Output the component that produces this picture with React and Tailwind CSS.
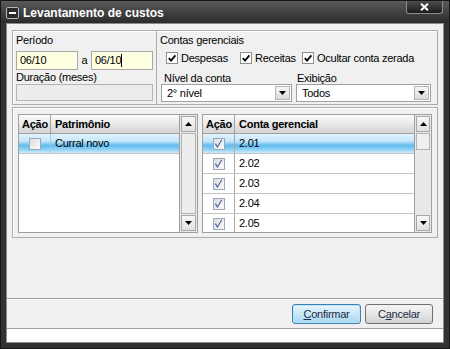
import React from 'react'

const Tri = ({ down }) => (
  <svg width="7" height="4" viewBox="0 0 7 4">
    <path d={down ? 'M0 0H7L3.5 4Z' : 'M0 4H7L3.5 0Z'} fill="#000" />
  </svg>
)

const Check = () => (
  <svg width="10" height="10" viewBox="0 0 10 10">
    <path d="M1.8 5.2 L4 7.6 L8.4 2.4" fill="none" stroke="#000" strokeWidth="1.8" />
  </svg>
)

const CheckItem = ({ label, className }) => (
  <div className={`flex items-center gap-[3px] ${className}`}>
    <div className="w-[12px] h-[12px] border border-[#8e8f8f] bg-white flex items-center justify-center">
      <Check />
    </div>
    <span>{label}</span>
  </div>
)

const GridCheck = ({ checked }) => (
  <div className="w-[12px] h-[12px] border border-[#9aa9ba] bg-gradient-to-br from-[#dedede] to-[#fbfbfb] flex items-center justify-center">
    {checked && (
      <svg width="9" height="9" viewBox="0 0 9 9">
        <path d="M1.4 4.6 L3.4 8 L7.8 0.8" fill="none" stroke="#4a6aa8" strokeWidth="1.2" />
      </svg>
    )}
  </div>
)

const Select = ({ value, className }) => (
  <div className={`h-[18px] flex bg-white border border-[#a0a0a0] ${className}`}>
    <span className="flex-1 pl-[5px] leading-[16px]">{value}</span>
    <div className="w-[15px] my-px mr-px border border-[#b4b4b4] bg-gradient-to-b from-[#f7f7f7] to-[#dadada] flex items-center justify-center">
      <Tri down />
    </div>
  </div>
)

const ScrollBtn = ({ down }) => (
  <div className="h-[16px] border border-[#a8a8a8] bg-gradient-to-b from-[#f8f8f8] to-[#e0e0e0] flex items-center justify-center">
    <Tri down={down} />
  </div>
)

const ScrollBar = ({ full, className }) => (
  <div className={`h-full flex flex-col gap-px p-px border border-[#a0a0a0] bg-[#e8e8e8] ${className}`}>
    <ScrollBtn />
    {full ? (
      <div className="flex-1 border border-[#b4b4b4] bg-[#ededed]" />
    ) : (
      <>
        <div className="h-[17px] border border-[#b4b4b4] bg-[#efefef]" />
        <div className="flex-1" />
      </>
    )}
    <ScrollBtn down />
  </div>
)

const selected = 'bg-[linear-gradient(to_bottom,#e2f4fd_0%,#c2e6fa_38%,#62bdef_60%,#86cdf3_78%,#cdebfb_100%)]'

const Header = ({ title }) => (
  <div className="h-[19px] flex border-b border-[#a0a0a0] bg-gradient-to-b from-[#fcfcfc] to-[#d4d4d4] font-bold">
    <div className="w-[32px] border-r border-[#a0a0a0] pl-[3px] leading-[18px]">Ação</div>
    <div className="flex-1 pl-[4px] leading-[18px]">{title}</div>
  </div>
)

export default function App() {
  const contas = ['2.01', '2.02', '2.03', '2.04', '2.05']

  return (
    <div className="w-[450px] h-[349px] flex flex-col bg-[#323232] border border-[#161616] text-[11px] tracking-[-0.25px] text-black font-['Liberation_Sans',Arial,sans-serif]">
      {/* Title bar */}
      <div className="h-[22px] flex items-start bg-gradient-to-b from-[#5a5a5a] to-[#2b2b2b]">
        <div className="mt-[6px] ml-[5px] w-[13px] h-[12px] rounded-[2px] border border-[#b8b8b8] bg-[#2a2a2a] flex items-center justify-center">
          <div className="w-[7px] h-[2px] bg-white" />
        </div>
        <span className="ml-[4px] mt-[5px] text-white font-bold text-[12px] leading-[14px] tracking-normal">Levantamento de custos</span>
        <div className="ml-auto mr-[6px] w-[37px] h-[13px] rounded-b-[3px] border border-t-0 border-[#8c8c8c] bg-gradient-to-b from-[#4e4e4e] to-[#1c1c1c] flex items-center justify-center">
          <svg width="9" height="8" viewBox="0 0 9 8">
            <path d="M1 0.8 L8 7.2 M8 0.8 L1 7.2" stroke="#fff" strokeWidth="2" />
          </svg>
        </div>
      </div>

      {/* Content */}
      <div className="flex-1 mx-[5px] mb-[5px] border border-[#8a8a8a] bg-[#f0f0f0] flex flex-col">
        <div className="flex-1 px-[5px] pt-[6px] flex flex-col">
          {/* Filters */}
          <div className="h-[75px] flex border border-[#acacac] shadow-[inset_1px_1px_0_#fff]">
            <div className="w-[144px] border-r border-[#acacac] pl-[3px] pt-[3px] flex flex-col">
              <div className="h-[13px] leading-[13px]">Período</div>
              <div className="mt-[4px] flex items-center">
                <div className="w-[62px] h-[19px] border border-[#a8a8a8] bg-[#ffffe1] pl-[3px] leading-[17px]">06/10</div>
                <span className="w-[13px] text-center">a</span>
                <div className="w-[62px] h-[19px] border border-[#a8a8a8] bg-[#ffffe1] pl-[3px] leading-[17px] flex">
                  06/10<span className="w-px h-[13px] mt-[2px] bg-black" />
                </div>
              </div>
              <div className="mt-[1px] h-[13px] leading-[13px]">Duração (meses)</div>
              <div className="w-[137px] h-[17px] border border-[#b4b4b4] bg-[#ececec]" />
            </div>
            <div className="flex-1 pl-[3px] pt-[3px] flex flex-col">
              <div className="h-[13px] leading-[13px]">Contas gerenciais</div>
              <div className="mt-[4px] ml-[6px] h-[14px] flex items-center">
                <CheckItem label="Despesas" className="w-[74px]" />
                <CheckItem label="Receitas" className="w-[62px]" />
                <CheckItem label="Ocultar conta zerada" />
              </div>
              <div className="mt-[7px] ml-[1px] flex gap-[4px]">
                <div className="w-[131px] flex flex-col">
                  <div className="pl-[3px] h-[12px] leading-[12px]">Nível da conta</div>
                  <Select value="2° nível" />
                </div>
                <div className="w-[135px] flex flex-col">
                  <div className="pl-[1px] h-[12px] leading-[12px]">Exibição</div>
                  <Select value="Todos" />
                </div>
              </div>
            </div>
          </div>

          {/* Grids */}
          <div className="mt-[2px] h-[131px] border border-[#acacac] shadow-[inset_1px_1px_0_#fff] px-[5px] pt-[6px] pb-[4px] flex gap-[4px]">
            <div className="w-[180px] h-[119px] flex">
              <div className="w-[161px] h-full border-y border-l border-[#a0a0a0] bg-white flex flex-col overflow-hidden">
                <Header title="Patrimônio" />
                <div className={`h-[20px] flex border-b border-[#c4c4c4] ${selected}`}>
                  <div className="w-[32px] border-r border-[#9fc8e0] flex items-center justify-center">
                    <GridCheck />
                  </div>
                  <div className="flex-1 pl-[4px] leading-[19px]">Curral novo</div>
                </div>
              </div>
              <ScrollBar full className="w-[19px]" />
            </div>

            <div className="w-[230px] h-[119px] flex">
              <div className="w-[212px] h-full border-y border-l border-[#a0a0a0] bg-white flex flex-col overflow-hidden">
                <Header title="Conta gerencial" />
                {contas.map((c, i) => (
                  <div key={c} className={`h-[20px] shrink-0 flex border-b border-[#c4c4c4] ${i === 0 ? selected : ''}`}>
                    <div className="w-[32px] border-r border-[#a8a8a8] flex items-center justify-center">
                      <GridCheck checked />
                    </div>
                    <div className="flex-1 pl-[4px] leading-[19px]">{c}</div>
                  </div>
                ))}
              </div>
              <ScrollBar className="w-[18px]" />
            </div>
          </div>
        </div>

        {/* Buttons */}
        <div className="border-t border-[#a0a0a0]">
          <div className="h-[29px] border-t border-white flex justify-end items-start pt-[4px] pr-[10px] gap-[4px]">
            <button className="w-[69px] h-[20px] rounded-[3px] border border-[#3c7fb1] bg-gradient-to-b from-[#eaf6fd] via-[#c9e7f8] to-[#a7d7f2] text-[11px] text-[#1a2b45] shadow-[inset_0_0_0_1px_#bde3f8]">
              <span className="underline">C</span>onfirmar
            </button>
            <button className="w-[68px] h-[20px] rounded-[3px] border border-[#707070] bg-gradient-to-b from-[#f4f4f4] via-[#e6e6e6] to-[#d2d2d2] text-[11px] text-[#1a2b45]">
              C<span className="underline">a</span>ncelar
            </button>
          </div>
        </div>
        <div className="h-[14px] border-t border-[#a0a0a0] bg-white" />
      </div>
    </div>
  )
}
